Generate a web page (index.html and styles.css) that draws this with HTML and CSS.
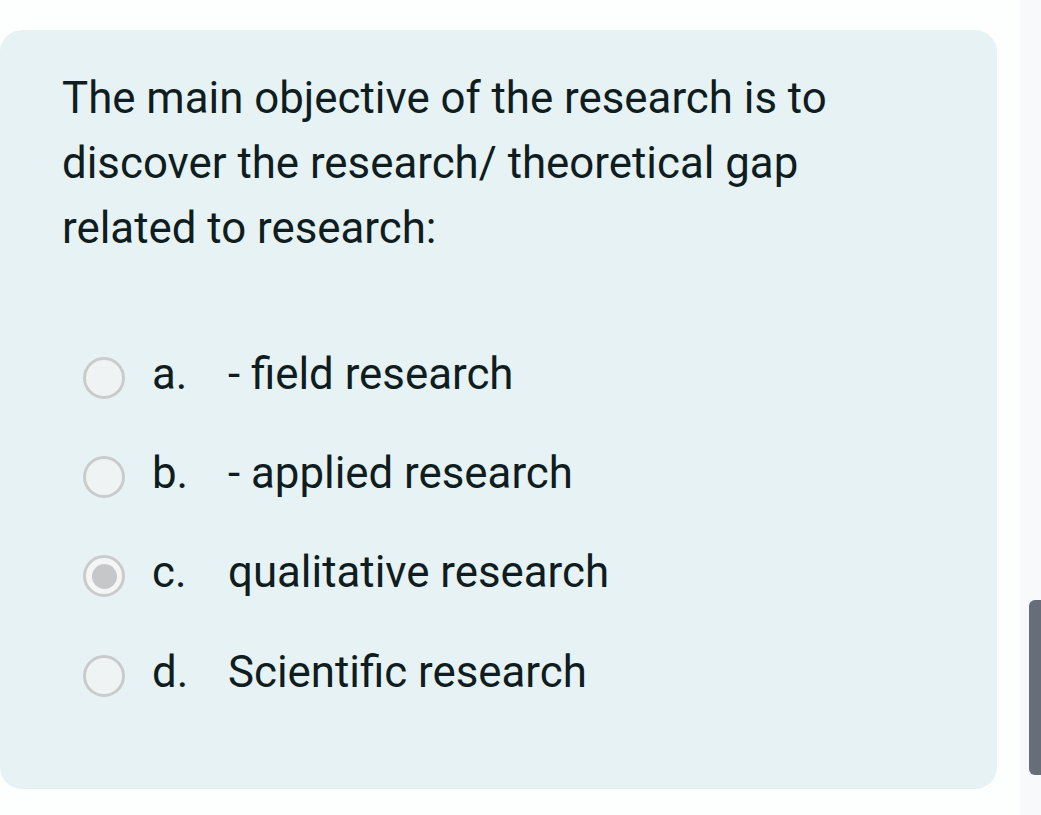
FILE: index.html
```html
<!DOCTYPE html>
<html>
<head>
<meta charset="utf-8">
<link rel="stylesheet" href="styles.css">
</head>
<body>
<div class="page">
  <div class="card">
    <div class="question">The main objective of the research is to discover the research/ theoretical gap related to research:</div>
    <div class="options">
      <div class="option"><span class="radio"></span><span class="letter">a.</span><span class="label">- field research</span></div>
      <div class="option"><span class="radio"></span><span class="letter">b.</span><span class="label">- applied research</span></div>
      <div class="option"><span class="radio checked"></span><span class="letter">c.</span><span class="label">qualitative research</span></div>
      <div class="option"><span class="radio"></span><span class="letter">d.</span><span class="label">Scientific research</span></div>
    </div>
  </div>
  <div class="scrolltrack"><div class="thumb"></div></div>
</div>
</body>
</html>
```
FILE: styles.css
```css
html, body { margin: 0; padding: 0; background: #fdfefe; }
body { font-family: Roboto, "Liberation Sans", sans-serif; color: #0f1c20; }
.page { position: relative; width: 1041px; height: 815px; overflow: hidden; }
.card {
  position: absolute; left: 0; top: 30px; width: 997px; height: 759px;
  background: #e6f2f4; border-radius: 22px; box-sizing: border-box;
  padding: 36px 60px 0 62px;
}
.question { font-size: 43.8px; line-height: 65px; width: 800px; }
.options { margin-top: 67px; display: flex; flex-direction: column; }
.option { display: flex; align-items: center; height: 99.4px; font-size: 43.8px; }
.radio {
  width: 42px; height: 42px; box-sizing: border-box; border-radius: 50%;
  border: 3px solid #c9cbcc; background: #f0f3f4; margin-left: 21px; flex: none;
  display: flex; align-items: center; justify-content: center;
}
.radio.checked { background: #f3f5f6; }
.radio.checked::after { content: ""; width: 25px; height: 25px; border-radius: 50%; background: #c5c7c9; }
.letter { width: 76px; margin-left: 27px; margin-bottom: 8px; }
.label { margin-bottom: 8px; }
.scrolltrack { position: absolute; right: 0; top: 0; width: 21px; height: 815px; background: #f8f9fa; }
.thumb { position: absolute; right: 0; top: 600px; width: 12px; height: 175px; background: #676e79; border-radius: 6px 0 0 6px; }
```
